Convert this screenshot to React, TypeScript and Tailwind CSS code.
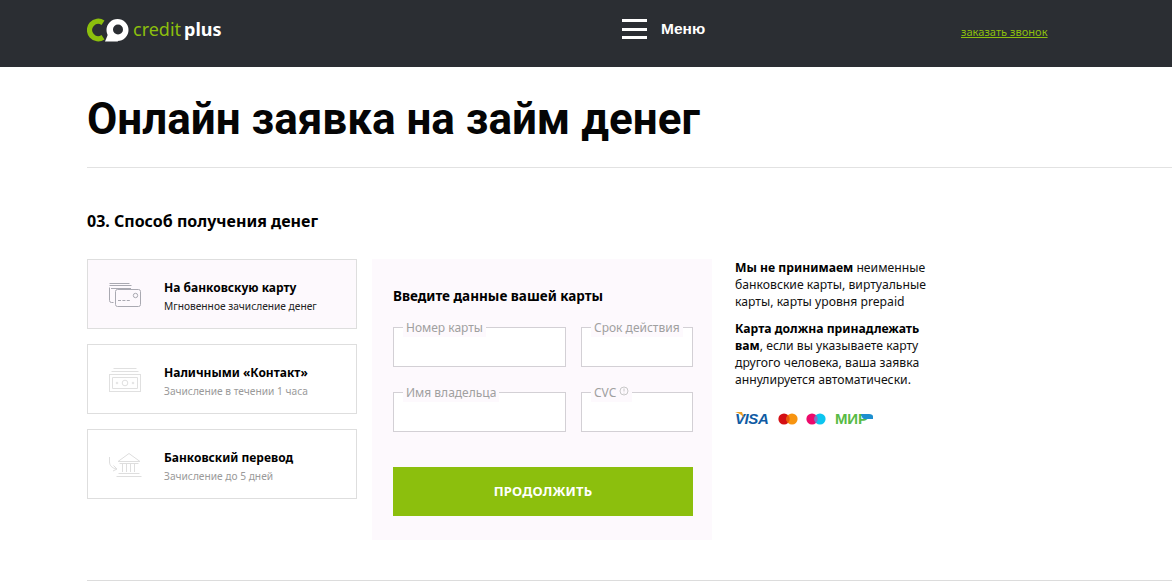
import React from "react";

const sans = "font-['Noto_Sans','Open_Sans',sans-serif]";

function CardIcon() {
  return (
    <svg width="34" height="26" viewBox="0 0 34 26" fill="none" stroke="#a9a9b1" strokeWidth="1">
      <path d="M1.5 1.5h20M1.5 3.5h22" />
      <path d="M1.5 5.5v13a2 2 0 0 0 2 2h2" />
      <path d="M3 6.5h20" />
      <rect x="7.5" y="7.5" width="25" height="17" rx="2" />
      <circle cx="27.5" cy="13.5" r="2.2" />
      <path d="M10 18.5h13" strokeDasharray="3 1.4" />
    </svg>
  );
}

function CashIcon() {
  return (
    <svg width="34" height="26" viewBox="0 0 34 26" fill="none" stroke="#e0e0e0" strokeWidth="1">
      <path d="M5.5 1.5h23M3.5 4.5h27" />
      <rect x="1.5" y="7.5" width="31" height="17" />
      <path d="M4.5 10.5h25v11h-25z" />
      <circle cx="17" cy="16" r="2.8" />
      <circle cx="9" cy="16" r="0.8" />
      <circle cx="25" cy="16" r="0.8" />
    </svg>
  );
}

function BankIcon() {
  return (
    <svg width="34" height="26" viewBox="0 0 34 26" fill="none" stroke="#dedede" strokeWidth="1">
      <path d="M10 9.5 21 1.5l11 8z" />
      <path d="M11.5 11.5h19M14.5 12v8M18.5 12v8M22.5 12v8M26.5 12v8" />
      <path d="M10.5 21.5h21M8.5 24.5h25" />
      <path d="M1.5 5v5c0 3 2 6 7 7" />
      <path d="M5.5 13.5 9 17l-4 2" />
    </svg>
  );
}

function Logo() {
  return (
    <div className="flex items-center">
      <svg width="42" height="24" viewBox="0 0 42 24" className="mt-[2px] shrink-0">
        <path d="M16 4.7A8.7 8.7 0 1 0 16 19.3" fill="none" stroke="#8cbf0d" strokeWidth="5.4" />
        <circle cx="30.5" cy="12" r="8" fill="#ffffff" stroke="#ffffff" strokeWidth="6" />
        <path d="M18 23.5 24 9l7 14.5z" fill="#ffffff" />
        <circle cx="31" cy="11.5" r="5" fill="#2b2e33" />
      </svg>
      <span className={`${sans} ml-[4px] text-[18px] leading-none text-[#8cbf0d]`}>credit</span>
      <span className={`${sans} ml-[3px] text-[18px] leading-none font-bold text-white`}>plus</span>
    </div>
  );
}

function Method({ icon, title, sub, active }: { icon: React.ReactNode; title: string; sub: string; active?: boolean }) {
  return (
    <div className={`flex h-[70px] items-center border border-[#dedede] pl-5 ${active ? "bg-[#fdf9fd]" : "bg-white"}`}>
      <div className="w-[56px] shrink-0 pt-[1px]">{icon}</div>
      <div className="pt-[4px]">
        <div className={`${sans} text-[12px] font-bold leading-[18px] text-black`}>{title}</div>
        <div className={`${sans} mt-[2px] text-[10.2px] leading-[15px] ${active ? "text-[#222]" : "text-[#9a9a9a]"}`}>{sub}</div>
      </div>
    </div>
  );
}

function Field({ label, hint }: { label: string; hint?: boolean }) {
  return (
    <div className="relative h-10 border border-[#d3d0d5] bg-white">
      <span className={`${sans} absolute left-[9px] top-[-9px] flex h-[18px] items-center gap-[3px] bg-[#fdf9fd] px-[3px] text-[12px] leading-4 text-[#a0a0a0]`}>
        {label}
        {hint && (
          <svg width="10" height="10" viewBox="0 0 10 10" fill="none" stroke="#c8c8c8" strokeWidth="1" className="mb-1">
            <circle cx="5" cy="5" r="4" />
            <path d="M5 2.5v3M5 6.8v.8" />
          </svg>
        )}
      </span>
    </div>
  );
}

function Payments() {
  return (
    <div className="mt-[24px] flex items-center">
      <span className="relative w-[34px] text-[15px] font-bold italic leading-[14px] tracking-[-0.4px] text-[#0f5ba3] font-['Liberation_Sans',sans-serif]">
        VISA
        <svg width="9" height="6" viewBox="0 0 9 6" className="absolute left-0 top-0">
          <path d="M0 0h7l2 6C7 3 4 1 0 0z" fill="#eda024" />
        </svg>
      </span>
      <svg width="20" height="12" viewBox="0 0 20 12" className="ml-[9px]">
        <circle cx="6" cy="6" r="5.6" fill="#d40f14" />
        <circle cx="14" cy="6" r="5.6" fill="#f79410" />
        <path d="M10 2a5.6 5.6 0 0 1 0 8 5.6 5.6 0 0 1 0-8z" fill="#e8590c" />
      </svg>
      <svg width="20" height="12" viewBox="0 0 20 12" className="ml-[8px]">
        <circle cx="6" cy="6" r="5.6" fill="#ec0a6b" />
        <circle cx="14" cy="6" r="5.6" fill="#0cc5f0" />
        <path d="M10 2a5.6 5.6 0 0 1 0 8 5.6 5.6 0 0 1 0-8z" fill="#8a6fc0" />
      </svg>
      <span className="relative ml-[9px] w-[38px] text-[15px] font-bold leading-[14px] tracking-[-0.2px] text-[#58bb45] font-['Liberation_Sans',sans-serif]">
        МИР
        <svg width="12" height="5" viewBox="0 0 12 5" className="absolute right-0 top-[2px]">
          <path d="M0 0h8a4 2.5 0 0 1 4 2.5V5H3C1.5 5 .5 2 0 0z" fill="#1d8fd0" />
        </svg>
      </span>
    </div>
  );
}

export default function App() {
  return (
    <div className={`${sans} h-[588px] w-[1172px] overflow-hidden bg-white`}>
      <header className="flex h-[67px] bg-[#2b2e33] pl-[87px]">
        <div className="flex w-[535px] shrink-0 items-center pb-[9px]">
          <Logo />
        </div>
        <div className="flex w-[339px] shrink-0 items-center pb-[9px]">
          <div className="flex h-[20px] w-[25px] flex-col justify-between">
            <span className="h-[3px] bg-white" />
            <span className="h-[3px] bg-white" />
            <span className="h-[3px] bg-white" />
          </div>
          <span className="ml-[14px] text-[15.5px] font-bold leading-5 text-white font-['Liberation_Sans',sans-serif]">Меню</span>
        </div>
        <a className="mt-[25px] self-start text-[11.1px] leading-[14px] text-[#8cbf0d] underline">заказать звонок</a>
      </header>

      <main className="pl-[87px]">
        <div className="flex h-[101px] items-start border-b border-[#e2e2e2]">
          <h1 className="mt-[22px] text-[44px] font-bold leading-[60px] text-[#050505] font-['Roboto',sans-serif]">Онлайн заявка на займ денег</h1>
        </div>

        <h2 className="mt-[43px] text-[16px] font-bold leading-5 text-black">03. Способ получения денег</h2>

        <div className="mt-[28px] flex items-start">
          <div className="flex w-[270px] shrink-0 flex-col gap-[15px]">
            <Method icon={<CardIcon />} title="На банковскую карту" sub="Мгновенное зачисление денег" active />
            <Method icon={<CashIcon />} title="Наличными «Контакт»" sub="Зачисление в течении 1 часа" />
            <Method icon={<BankIcon />} title="Банковский перевод" sub="Зачисление до 5 дней" />
          </div>

          <section className="ml-[15px] h-[281px] w-[340px] shrink-0 bg-[#fdf9fd] px-[21px] pt-[27px]">
            <h3 className="text-[13.5px] font-bold leading-5 text-black">Введите данные вашей карты</h3>
            <div className="mt-[21px] grid grid-cols-[173px_112px] gap-x-[15px] gap-y-[25px]">
              <Field label="Номер карты" />
              <Field label="Срок действия" />
              <Field label="Имя владельца" />
              <Field label="CVC" hint />
            </div>
            <button className="mt-[35px] flex h-[49px] w-[300px] items-center justify-center bg-[#8cbf0d] text-[13px] font-bold tracking-[0.2px] text-white">
              ПРОДОЛЖИТЬ
            </button>
          </section>

          <aside className="ml-[23px] w-[205px] shrink-0 text-[12.2px] leading-[17px] text-[#111]">
            <p>
              <b className="text-black">Мы не принимаем</b> неименные банковские карты, виртуальные карты, карты уровня prepaid
            </p>
            <p className="mt-[10px]">
              <b className="text-black">Карта должна принадлежать вам</b>, если вы указываете карту другого человека, ваша заявка аннулируется автоматически.
            </p>
            <Payments />
          </aside>
        </div>

        <div className="mt-[40px] border-t border-[#dcdcdc]" />
      </main>
    </div>
  );
}
